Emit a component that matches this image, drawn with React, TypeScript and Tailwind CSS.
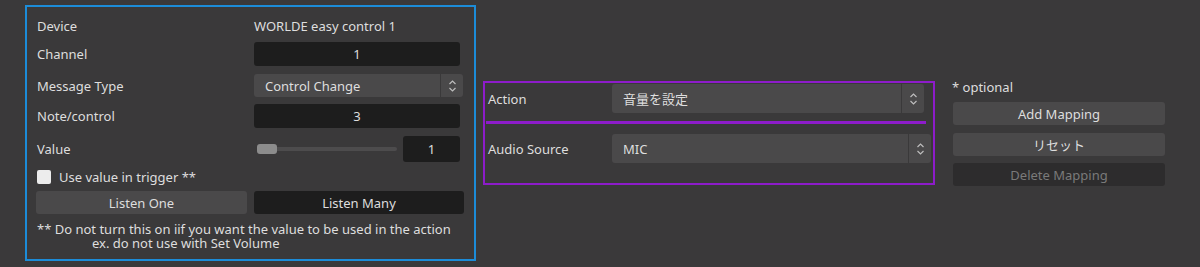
import React from "react";

const font = { fontFamily: '"Noto Sans", "Noto Sans CJK JP", sans-serif' };

// tiny up/down arrows used on the combo boxes
const Spin = () => (
  <svg width="9" height="14" viewBox="0 0 9 14" fill="none" stroke="#bdbdbd" strokeWidth="1.2">
    <path d="M1.5 5 L4.5 2 L7.5 5" />
    <path d="M1.5 9 L4.5 12 L7.5 9" />
  </svg>
);

const Combo = ({ text, className }: { text: string; className: string }) => (
  <div className={`flex rounded-[3px] bg-[#4a494a] text-[#dedede] ${className}`}>
    <div className="flex flex-1 items-center pl-[11px] pt-[2px]">{text}</div>
    <div className="flex w-[23px] items-center justify-center border-l border-[#3a393a]">
      <Spin />
    </div>
  </div>
);

const Field = ({ value, className }: { value: string; className: string }) => (
  <div className={`flex items-center justify-center rounded-[3px] bg-[#1d1d1d] pt-[2px] text-[#dedede] ${className}`}>
    {value}
  </div>
);

const Row = ({ label, children, className }: { label: string; children: React.ReactNode; className: string }) => (
  <div className={`flex items-center ${className}`}>
    <div className="w-[217px] shrink-0 pt-[2px]">{label}</div>
    {children}
  </div>
);

const MidiPanel = () => (
  <div className="flex h-[256px] w-[451px] shrink-0 flex-col border-2 border-[#1c8cd8] pl-[10px] pt-[8px]">
    <Row label="Device" className="h-[22px]">
      <span className="pt-[2px]">WORLDE easy control 1</span>
    </Row>
    <Row label="Channel" className="mt-[5px] h-[24px]">
      <Field value="1" className="h-[24px] w-[206px]" />
    </Row>
    <Row label="Message Type" className="mt-[8px] h-[23px]">
      <Combo text="Control Change" className="h-[23px] w-[209px]" />
    </Row>
    <Row label="Note/control" className="mt-[7px] h-[24px]">
      <Field value="3" className="h-[24px] w-[206px]" />
    </Row>
    <Row label="Value" className="mt-[8px] h-[26px]">
      <div className="ml-[3px] flex w-[140px] items-center">
        <div className="relative h-[4px] w-full rounded-full bg-[#4d4c4d]">
          <div className="absolute left-0 top-[-3px] h-[10px] w-[20px] rounded-[3px] bg-[#8c8c8c]" />
        </div>
      </div>
      <Field value="1" className="ml-[6px] h-[26px] w-[57px]" />
    </Row>
    <div className="mt-[7px] flex h-[16px] items-center">
      <div className="h-[14px] w-[14px] rounded-[2px] bg-[#ececec]" />
      <span className="ml-[8px] pt-[2px]">Use value in trigger **</span>
    </div>
    <div className="mt-[6px] flex h-[23px] gap-[7px]">
      <div className="ml-[-1px] flex w-[211px] items-center justify-center rounded-[3px] bg-[#4a494a] pt-[2px]">Listen One</div>
      <div className="flex w-[210px] items-center justify-center rounded-[3px] bg-[#1d1d1d] pt-[2px]">Listen Many</div>
    </div>
    <div className="mt-[8px] leading-[14px]">
      <div className="h-[14px]">** Do not turn this on iif you want the value to be used in the action</div>
      <div className="h-[14px] pl-[55px]">ex. do not use with Set Volume</div>
    </div>
  </div>
);

const ActionPanel = () => (
  <div className="ml-[7px] mt-[76px] flex h-[104px] w-[452px] shrink-0 flex-col border-2 border-[#8d1cca] pl-[3px] pt-[1px]">
    <div className="flex h-[29px] items-center">
      <div className="w-[124px] pt-[3px]">Action</div>
      <Combo text="音量を設定" className="h-[29px] w-[312px]" />
    </div>
    <div className="ml-[-2px] mt-[8px] h-[3px] w-[440px] bg-[#8d1cca]" />
    <div className="mt-[10px] flex h-[29px] items-center">
      <div className="w-[124px] pt-[3px]">Audio Source</div>
      <Combo text="MIC" className="h-[29px] w-[319px]" />
    </div>
  </div>
);

const MappingButtons = () => (
  <div className="ml-[17px] mt-[76px] flex w-[213px] flex-col">
    <div className="h-[16px] leading-[12px]">* optional</div>
    <div className="ml-[1px] mt-[5px] flex h-[23px] items-center justify-center rounded-[3px] bg-[#4a494a] pt-[2px]">Add Mapping</div>
    <div className="ml-[1px] mt-[8px] flex h-[23px] items-center justify-center rounded-[3px] bg-[#4a494a] pt-[2px]">リセット</div>
    <div className="ml-[1px] mt-[7px] flex h-[23px] items-center justify-center rounded-[3px] bg-[#2d2c2d] pt-[2px] text-[#7a7a7a]">Delete Mapping</div>
  </div>
);

export default function App() {
  return (
    <div style={font} className="flex h-[267px] w-[1200px] items-start bg-[#3a393a] pl-[25px] pt-[5px] text-[13px] text-[#dedede]">
      <MidiPanel />
      <ActionPanel />
      <MappingButtons />
    </div>
  );
}
